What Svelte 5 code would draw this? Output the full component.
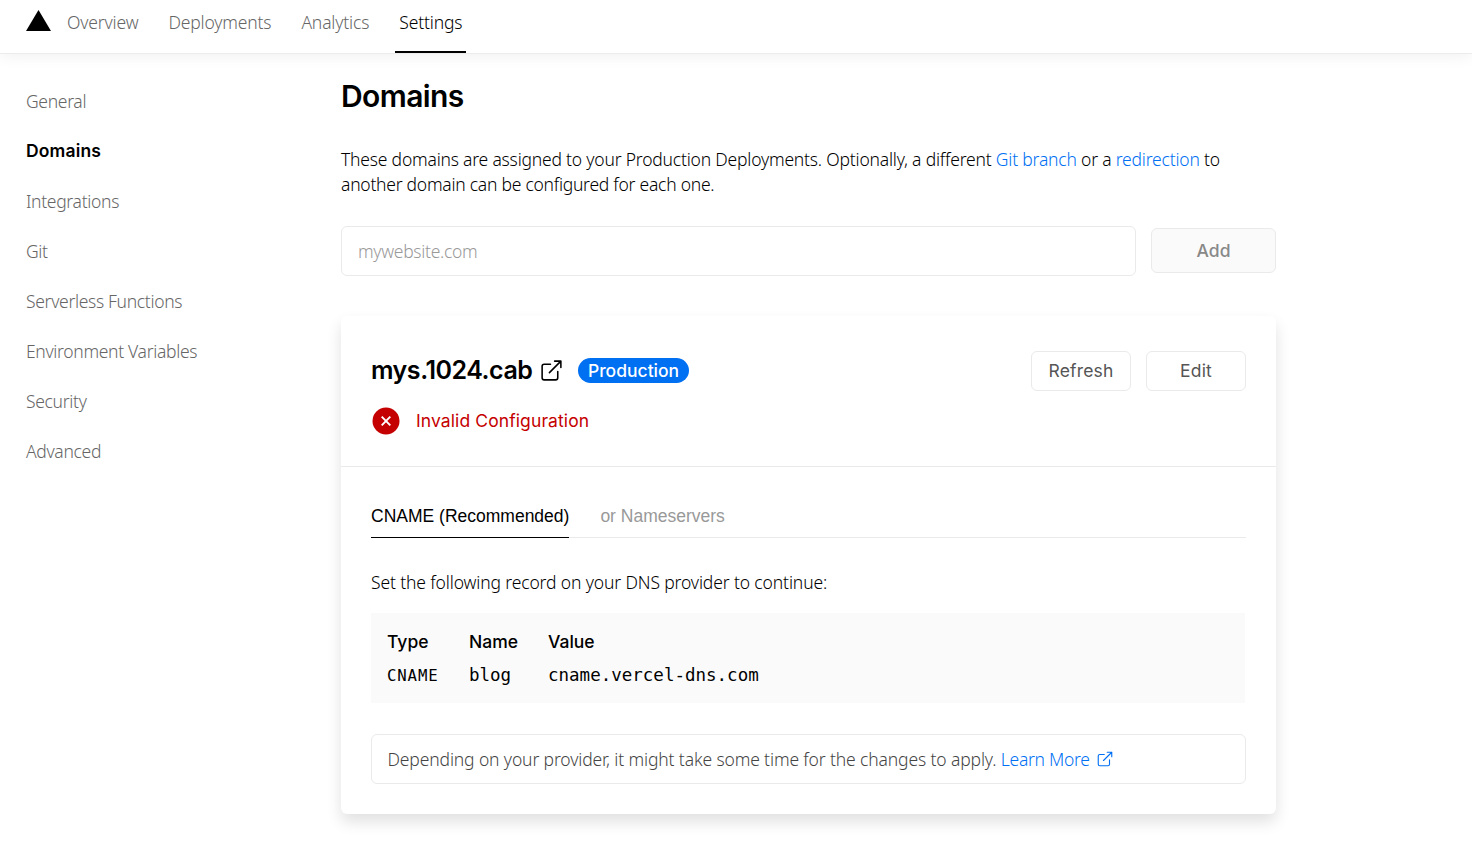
<script>
  const nav = ['Overview', 'Deployments', 'Analytics', 'Settings'];
  const side = ['General', 'Domains', 'Integrations', 'Git', 'Serverless Functions', 'Environment Variables', 'Security', 'Advanced'];
</script>

{#snippet external()}
  <svg class="external" viewBox="0 0 24 24" fill="none" stroke="currentColor" stroke-width="1.5" stroke-linecap="round" stroke-linejoin="round">
    <path d="M18 13v6a2 2 0 0 1-2 2H5a2 2 0 0 1-2-2V8a2 2 0 0 1 2-2h6M15 3h6v6M10 14 21 3" />
  </svg>
{/snippet}

<header>
  <svg class="logo" viewBox="0 0 25 21"><path d="M12.5 0 25 21H0Z" /></svg>
  <nav>
    {#each nav as item}
      <a class:active={item === 'Settings'}>{item}</a>
    {/each}
  </nav>
</header>

<div class="page">
  <aside>
    {#each side as item}
      <a class:active={item === 'Domains'}>{item}</a>
    {/each}
  </aside>

  <main>
    <h1>Domains</h1>
    <p class="intro">
      These domains are assigned to your Production Deployments. Optionally, a different <a>Git branch</a> or a <a>redirection</a> to<br /><span class="second">another domain can be configured for each one.</span>
    </p>
    <form>
      <div class="field">mywebsite.com</div>
      <button type="button" class="add">Add</button>
    </form>

    <section class="card">
      <div class="top">
        <div class="info">
          <h2><span class="domain">mys.1024.cab</span>{@render external()}<span class="badge">Production</span></h2>
          <div class="status">
            <svg viewBox="0 0 28 28"><circle cx="14" cy="14" r="13.5" fill="#c50000" /><path d="m9.7 9.7 8.6 8.6m0-8.6-8.6 8.6" stroke="#fff" stroke-width="1.9" /></svg>
            <span>Invalid Configuration</span>
          </div>
        </div>
        <div class="actions">
          <button type="button">Refresh</button>
          <button type="button">Edit</button>
        </div>
      </div>
      <div class="body">
        <div class="tabs">
          <div class="tab active">CNAME (Recommended)</div>
          <div class="tab">or Nameservers</div>
        </div>
        <p class="hint">Set the following record on your DNS provider to continue:</p>
        <div class="record">
          <b>Type</b><b>Name</b><b>Value</b>
          <code class="type">CNAME</code><code>blog</code><code>cname.vercel-dns.com</code>
        </div>
        <div class="note"><span>Depending on your provider, it might take some time for the changes to apply.</span>&nbsp;<a>Learn More{@render external()}</a></div>
      </div>
    </section>
  </main>
</div>

<style>
  :global(body) { background: #fff; color: #000; font-family: "Noto Sans", sans-serif; font-size: 17.5px; font-weight: 300; letter-spacing: -0.2px; overflow: hidden; }
  header { display: flex; height: 53px; box-shadow: 0 1px 0 #ececec, 0 2px 16px rgba(0, 0, 0, 0.07); padding-left: 26px; }
  .logo { width: 25px; height: 21px; margin-top: 10px; }
  nav { display: flex; margin-left: 12px; gap: 22px; letter-spacing: -0.16px; }
  nav a { display: block; height: 51px; padding: 0 4px; line-height: 45px; color: #666; }
  nav a.active { color: #000; border-bottom: 2px solid #000; }
  .page { display: flex; min-height: 794px; }
  aside { width: 315px; box-sizing: border-box; padding: 24px 0 0 26px; display: flex; flex-direction: column; letter-spacing: -0.32px; }
  aside a { height: 50px; line-height: 49px; color: #666; }
  aside a.active { font-family: Inter, sans-serif; font-weight: 600; color: #000; letter-spacing: 0.15px; line-height: 48px; }
  main { width: 935px; margin-left: 26px; }
  h1 { font: 600 30px/40px Inter, sans-serif; letter-spacing: -0.6px; margin: 23px 0 0; }
  .intro { margin: 31px 0 0; line-height: 25px; white-space: nowrap; }
  .second { letter-spacing: -0.25px; }
  a { color: #0070f3; }
  form { display: flex; align-items: flex-start; gap: 15px; margin-top: 29px; }
  .field { width: 777px; height: 48px; border: 1px solid #eaeaea; border-radius: 6px; line-height: 49px; padding-left: 16px; color: #999; letter-spacing: -0.3px; }
  button { font: 400 17.5px Inter, sans-serif; letter-spacing: 0.15px; color: #555; background: #fff; border: 1px solid #eaeaea; border-radius: 6px; width: 100px; height: 40px; padding: 0 0 1px; }
  .add { width: 125px; height: 45px; margin-top: 2px; background: #fafafa; color: #888; font-weight: 500; letter-spacing: 0; }
  .card { margin-top: 40px; height: 498px; border-radius: 6px; box-shadow: 0 8px 15px rgba(0, 0, 0, 0.12); }
  .top { display: flex; justify-content: space-between; height: 151px; padding: 35px 30px 0; border-bottom: 1px solid #eaeaea; box-sizing: border-box; }
  h2 { display: flex; align-items: center; font: 600 25px/38px Inter, sans-serif; letter-spacing: -0.47px; margin: 0; height: 39px; }
  .domain { margin-top: -1px; }
  h2 .external { width: 25px; height: 25px; margin-left: 7px; }
  .badge { font: 500 17.5px/25px Inter, sans-serif; letter-spacing: 0; background: #0070f3; color: #fff; border-radius: 13px; padding: 0 10px; margin-left: 13.5px; }
  .status { display: flex; align-items: center; margin-top: 17px; margin-left: 1px; height: 28px; font: 400 17.5px Inter, sans-serif; letter-spacing: 0.1px; color: #c50000; gap: 16px; }
  .status svg { width: 28px; height: 28px; }
  .status span { padding-bottom: 1px; }
  .actions { display: flex; gap: 15px; }
  .body { padding: 26px 30px 0; }
  .tabs { display: flex; font: 17.5px/46px "Liberation Sans", sans-serif; letter-spacing: 0; border-bottom: 1px solid #eaeaea; height: 44px; gap: 31px; color: #999; }
  .tab.active { border-bottom: 1px solid #000; color: #000; height: 44px; }
  .hint { margin: 32px 0 0; line-height: 25px; letter-spacing: -0.13px; }
  .record { display: grid; grid-template-columns: 82px 79px 1fr; grid-template-rows: 33px 33px; background: #fafafa; height: 90px; box-sizing: border-box; padding: 12px 16px; margin: 18px 1px 0 0; line-height: 33px; letter-spacing: 0; }
  .record b { font: 500 17.5px/33px Inter, sans-serif; }
  .record code { font: 17.5px/35px "DejaVu Sans Mono", monospace; }
  .record .type { font-size: 15.7px; letter-spacing: 0.85px; }
  .note { display: flex; border: 1px solid #eaeaea; border-radius: 6px; height: 48px; line-height: 49px; margin-top: 31px; padding-left: 15.5px; color: #444; letter-spacing: -0.13px; }
  .note a { display: flex; align-items: center; letter-spacing: -0.28px; }
  .note .external { width: 18px; height: 18px; margin-left: 6px; }
</style>
